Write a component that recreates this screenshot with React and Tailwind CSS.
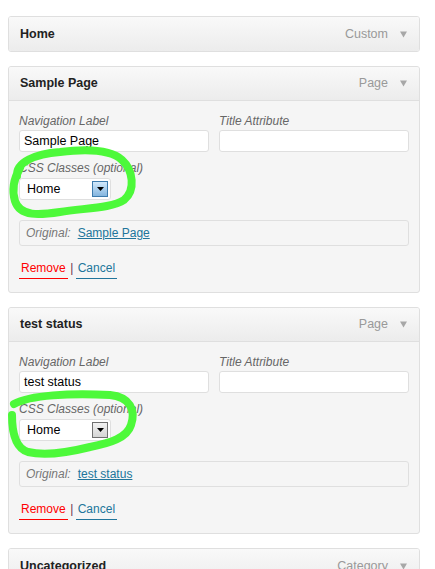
import React from "react";

function Caret() {
  return (
    <svg width="7" height="7" viewBox="0 0 7 7" className="block">
      <polygon points="0,0.5 7,0.5 3.5,6.5" fill="#a7a7a7" />
    </svg>
  );
}

function SelectBox({ active }) {
  return (
    <div className="mt-[1px] flex h-[22px] w-[92px] items-center justify-between rounded-[3px] border border-[#dfdfdf] bg-white pl-[7px] pr-[2px]">
      <span className="text-[12.5px] leading-none text-black">Home</span>
      <span
        className={
          active
            ? "flex h-[16px] w-[16px] items-center justify-center border border-[#3d7bad] bg-linear-to-b from-[#d2e9fb] to-[#84b5de]"
            : "flex h-[16px] w-[16px] items-center justify-center border border-[#707070] bg-linear-to-b from-[#f2f2f2] to-[#d5d5d5]"
        }
      >
        <svg width="7" height="4" viewBox="0 0 7 4" className="block">
          <polygon points="0,0 7,0 3.5,4" fill="#000" />
        </svg>
      </span>
    </div>
  );
}

function Header({ title, type, divider }) {
  return (
    <div
      className={
        "flex h-[34px] items-center justify-between bg-linear-to-b from-[#f9f9f9] to-[#ececec] pl-[11px] pr-[12px]" +
        (divider ? " border-b border-[#dfdfdf]" : "")
      }
    >
      <span className="text-[12.5px] font-bold text-[#222]">{title}</span>
      <div className="flex items-center gap-[12px]">
        <span className="text-[12.5px] text-[#999]">{type}</span>
        <Caret />
      </div>
    </div>
  );
}

function MenuItem({ title, type, open, active }) {
  return (
    <div className="w-[412px] overflow-hidden rounded-[3px] border border-[#dfdfdf] bg-[#f5f5f5]">
      <Header title={title} type={type} divider={open} />
      {open && (
        <div className="px-[10px] pb-[13px] pt-[11px]">
          <div className="grid grid-cols-[190px_190px] gap-x-[10px]">
            <div>
              <div className="text-[12px] italic leading-[18px] text-[#666]">Navigation Label</div>
              <div className="flex h-[22px] items-center rounded-[3px] border border-[#dfdfdf] bg-white pl-[4px] text-[12.5px] text-black">
                {title}
              </div>
            </div>
            <div>
              <div className="text-[12px] italic leading-[18px] text-[#666]">Title Attribute</div>
              <div className="h-[22px] rounded-[3px] border border-[#dfdfdf] bg-white" />
            </div>
          </div>
          <div className="mt-[7px] text-[12px] italic leading-[18px] text-[#666]">CSS Classes (optional)</div>
          <SelectBox active={active} />
          <div className="mt-[20px] flex h-[26px] items-center rounded-[3px] border border-[#dfdfdf] pl-[6px] text-[12px]">
            <span className="italic text-[#777]">Original:</span>
            <span className="ml-[7px] text-[#21759b] underline">{title}</span>
          </div>
          <div className="mt-[14px] flex items-start text-[12px] leading-[16px]">
            <span className="border-b border-[#ff0000] px-[2px] pb-[2px] text-[#ff0000]">Remove</span>
            <span className="w-[8px] text-center text-[#6b3450]">|</span>
            <span className="border-b border-[#21759b] px-[2px] pb-[2px] text-[#21759b]">Cancel</span>
          </div>
        </div>
      )}
    </div>
  );
}

export default function App() {
  return (
    <div className="relative h-[569px] w-[435px] overflow-hidden bg-white font-['Liberation_Sans',Arial,sans-serif]">
      <div className="flex flex-col gap-[14px] pl-[8px] pt-[16px]">
        <MenuItem title="Home" type="Custom" />
        <MenuItem title="Sample Page" type="Page" open active />
        <MenuItem title="test status" type="Page" open />
        <MenuItem title="Uncategorized" type="Category" />
      </div>
      <svg
        className="pointer-events-none absolute left-0 top-0"
        width="435"
        height="569"
        viewBox="0 0 435 569"
      >
        <path
          d="M 17 176 C 16 162, 35 154, 60 152 C 85 149, 110 149, 122 160 C 133 170, 136 190, 124 200 C 112 208, 85 208, 60 212 C 40 215, 20 217, 15 201 C 12 191, 13 180, 20 168"
          fill="none"
          stroke="#4df93a"
          strokeWidth="8"
          strokeLinecap="round"
        />
        <path
          d="M 14 404 C 30 395, 70 393, 110 395 C 130 397, 136 410, 131 425 C 127 438, 110 443, 90 447 C 70 452, 45 456, 28 452 C 15 448, 12 430, 12 415"
          fill="none"
          stroke="#4df93a"
          strokeWidth="8"
          strokeLinecap="round"
        />
      </svg>
    </div>
  );
}
